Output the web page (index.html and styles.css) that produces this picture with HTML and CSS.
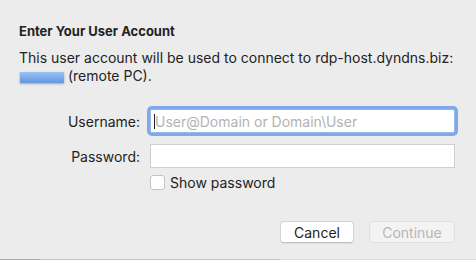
FILE: index.html
```html
<!DOCTYPE html>
<html>
  <head>
    <meta charset="utf-8">
    <title>Enter Your User Account</title>
    <link rel="stylesheet" href="styles.css">
  </head>
  <body>
    <div class="dialog">
      <h1>Enter Your User Account</h1>
      <p class="message">
        This user account will be used to connect to rdp-host.dyndns.biz:<br>
        <span class="redacted"></span> (remote PC).
      </p>
      <form class="fields">
        <label for="username">Username:</label>
        <div class="field focused">
          <span class="caret"></span>
          <input id="username" type="text" placeholder="User@Domain or Domain\User">
        </div>
        <label for="password">Password:</label>
        <div class="field">
          <input id="password" type="password">
        </div>
        <span></span>
        <label class="check">
          <span class="box"></span>
          Show password
        </label>
      </form>
      <div class="buttons">
        <button type="button" class="btn">Cancel</button>
        <button type="button" class="btn disabled">Continue</button>
      </div>
    </div>
    <div class="edge"></div>
  </body>
</html>
```

FILE: styles.css
```css
body, html {
    padding: 0;
    margin: 0;
    background: #ececec;
    font-family: 'Inter', 'Liberation Sans', sans-serif;
    font-size: 14px;
    color: #232323;
}

.dialog {
    height: 259px;
    padding: 23px 21px 0 19px;
    box-sizing: border-box;
}

h1 {
    margin: 0;
    font-size: 13px;
    font-weight: 700;
    line-height: 16px;
}

.message {
    margin: 10px 0 0;
    line-height: 18px;
}

.redacted {
    display: inline-block;
    width: 44px;
    height: 11px;
    margin-left: 1px;
    vertical-align: -2px;
    background: linear-gradient(#9cc2f4, #6196e2);
    box-shadow: 0 1px 2px rgba(0, 0, 0, 0.3);
}

.fields {
    display: grid;
    grid-template-columns: 121px 305px;
    column-gap: 10px;
    row-gap: 11px;
    align-items: center;
    margin-top: 24px;
}

.fields > label {
    text-align: right;
}

.field {
    position: relative;
    height: 24px;
    box-sizing: border-box;
    background: #fff;
    border: 1px solid #cfcfcf;
}

.field.focused {
    border-color: #9ab8e4;
    box-shadow: 0 0 0 3px #7ea9ec;
    border-radius: 2px;
}

.field input {
    width: 100%;
    height: 100%;
    box-sizing: border-box;
    border: 0;
    padding: 0 4px;
    background: transparent;
    font: inherit;
    outline: none;
}

.field input::placeholder {
    color: #b3b3b3;
}

.caret {
    position: absolute;
    left: 3px;
    top: 4px;
    width: 1px;
    height: 15px;
    background: #222;
}

.check {
    display: flex;
    align-items: center;
    gap: 5px;
    margin-top: -5px;
}

.box {
    width: 13px;
    height: 13px;
    background: #fff;
    border: 1px solid #c4c4c4;
    border-radius: 3px;
}

.buttons {
    display: flex;
    justify-content: flex-end;
    gap: 15px;
    margin-top: 30px;
}

.btn {
    height: 22px;
    padding: 0;
    width: 74px;
    font: inherit;
    color: #1e1e1e;
    background: #fff;
    border: 1px solid #d3d3d3;
    border-bottom-color: #c2c2c2;
    border-radius: 4px;
    box-shadow: 0 1px 1px rgba(0, 0, 0, 0.06);
}

.btn.disabled {
    width: 86px;
    color: #b6b6b6;
    background: #f3f3f3;
    border-color: #e0e0e0;
    box-shadow: none;
}

.edge {
    height: 1px;
    background: linear-gradient(to right, #a8a8a8 0, #a8a8a8 40px, #c6c6c6 40px, #c6c6c6 280px, #dedede 280px);
}
```
